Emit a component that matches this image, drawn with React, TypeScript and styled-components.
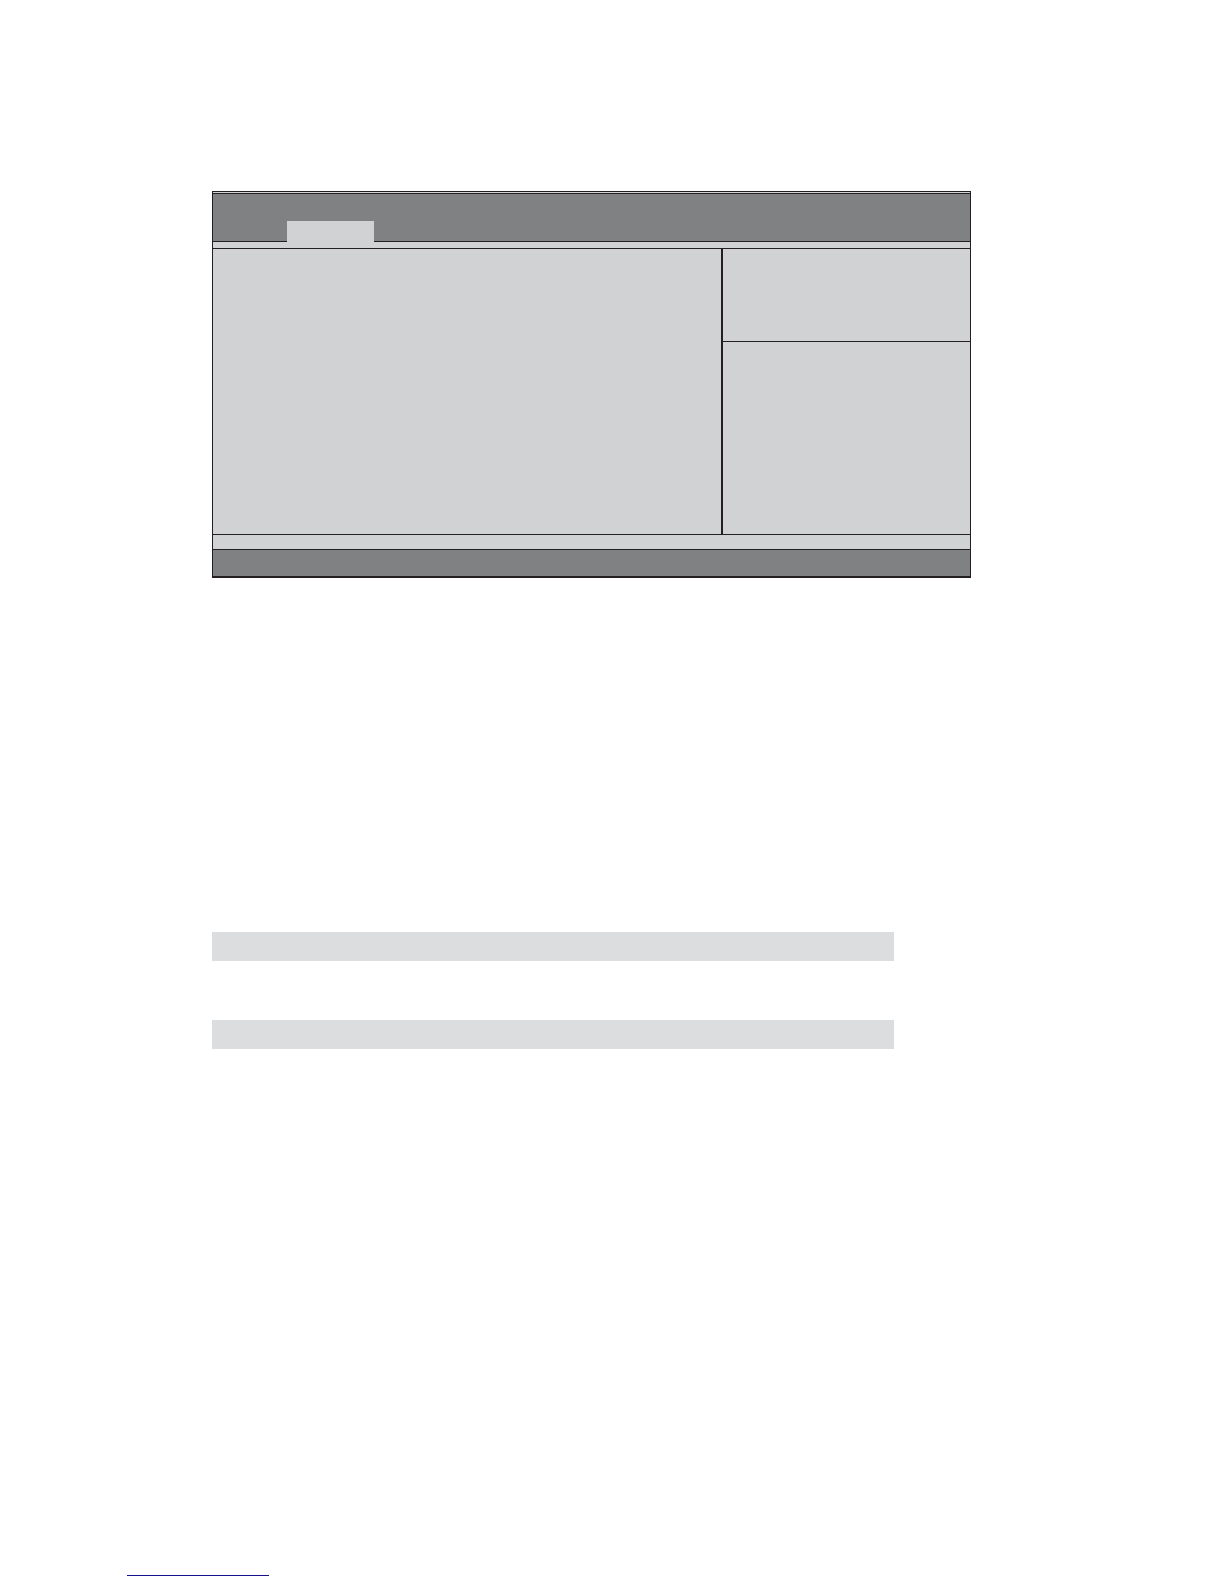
import React from "react";
import styled, { createGlobalStyle } from "styled-components";

const ink = "#231f20";
const dark = "#808183";
const light = "#d1d2d4";
const shade = "#dcddde";
const link = "#14108f";

const GlobalStyle = createGlobalStyle`
  *, *::before, *::after { box-sizing: border-box; }
  body {
    margin: 0;
    background: #ffffff;
    font-family: "Liberation Sans", Arial, sans-serif;
  }
`;

const Page = styled.div`
  display: flex;
  flex-direction: column;
  padding: 191px 0 8px;
`;

const Content = styled.main`
  padding: 0 253px 0 212px;
`;

const Screen = styled.section`
  border: 1px solid ${ink};
  border-bottom-width: 2px;
  background: ${light};
`;

const TopEdge = styled.div`
  height: 2px;
  border-bottom: 1px solid ${ink};
`;

const MenuBar = styled.nav`
  display: flex;
  align-items: flex-end;
  min-height: 48px;
  padding-left: 74px;
  background: ${dark};
  border-bottom: 1px solid ${ink};
`;

const Tab = styled.button`
  width: 87px;
  height: 21px;
  margin: 0 0 -1px;
  padding: 0;
  border: 0;
  background: ${light};
`;

const Strip = styled.div<{ $height: number }>`
  height: ${(p) => p.$height}px;
  border-bottom: 1px solid ${ink};
`;

const Panels = styled.div`
  display: grid;
  grid-template-columns: 1fr 249px;
  min-height: 286px;
  border-bottom: 1px solid ${ink};
`;

const Settings = styled.div``;

const Side = styled.aside`
  display: flex;
  flex-direction: column;
  border-left: 2px solid ${ink};
`;

const HelpPanel = styled.div`
  min-height: 93px;
  border-bottom: 1px solid ${ink};
`;

const KeysPanel = styled.div`
  flex: 1;
`;

const StatusBar = styled.div`
  height: 26px;
  background: ${dark};
`;

const Options = styled.section`
  display: flex;
  flex-direction: column;
  gap: 59px;
  padding: 354px 77px 0 0;
`;

const OptionHeading = styled.div`
  height: 29px;
  background: ${shade};
`;

const Footer = styled.footer`
  display: flex;
  padding: 507px 0 0 127px;
`;

const FooterLink = styled.a`
  width: 142px;
  height: 20px;
  border-bottom: 1px solid ${link};
`;

export default function App() {
  return (
    <>
      <GlobalStyle />
      <Page>
        <Content>
          <Screen>
            <TopEdge />
            <MenuBar>
              <Tab type="button" />
            </MenuBar>
            <Strip $height={7} />
            <Panels>
              <Settings />
              <Side>
                <HelpPanel />
                <KeysPanel />
              </Side>
            </Panels>
            <Strip $height={15} />
            <StatusBar />
          </Screen>
          <Options>
            <OptionHeading />
            <OptionHeading />
          </Options>
        </Content>
        <Footer>
          <FooterLink href="#" />
        </Footer>
      </Page>
    </>
  );
}
